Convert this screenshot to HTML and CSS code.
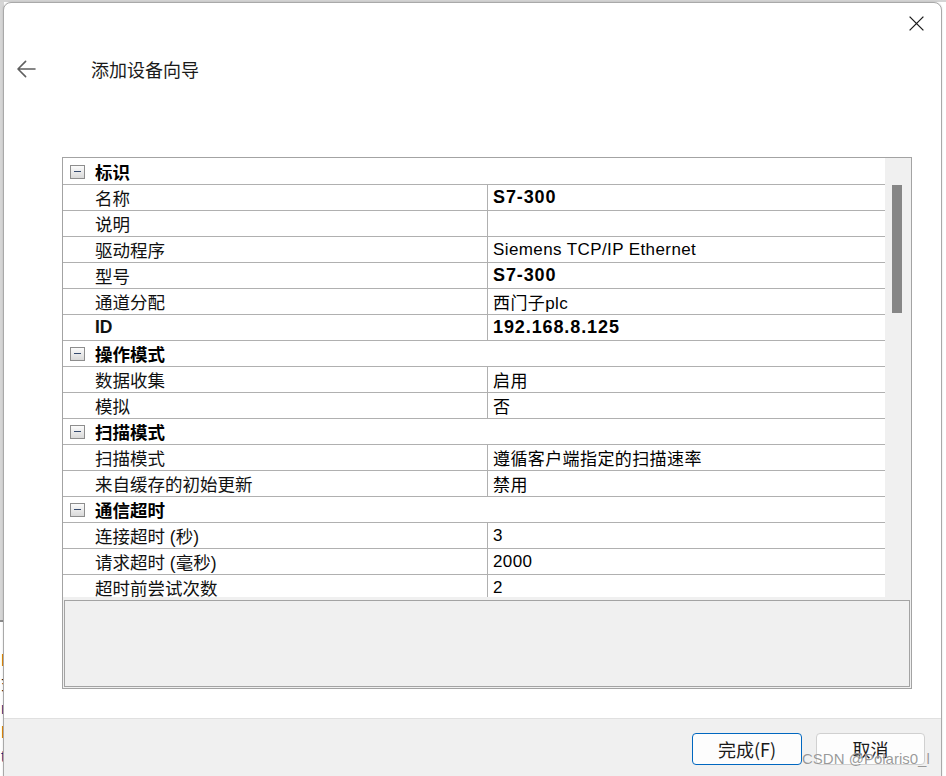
FILE: index.html
```html
<!DOCTYPE html>
<html lang="zh-CN">
<head>
<meta charset="utf-8">
<title>添加设备向导</title>
<link rel="stylesheet" href="styles.css">
</head>
<body>
<div class="desktop">
  <div class="backwin">
    <div class="back-line orange">E</div>
    <div class="back-line">式</div>
    <div class="back-line navy">n</div>
    <div class="back-line orange">E</div>
    <div class="back-line navy">t</div>
  </div>

  <div class="dialog">
    <div class="main">
      <div class="topbar">
        <svg class="close" width="15" height="15" viewBox="0 0 15 15"><path d="M0.6 0.6 L14.4 14.4 M14.4 0.6 L0.6 14.4" stroke="#1b1b1b" stroke-width="1.3" fill="none"/></svg>
      </div>
      <div class="titlebar">
        <svg class="back" width="20" height="20" viewBox="0 0 20 20"><path d="M19 10 H2.2 M9.6 2.4 L2 10 L9.6 17.6" stroke="#5f5f5f" stroke-width="1.6" fill="none" stroke-linecap="round" stroke-linejoin="round"/></svg>
        <div class="title">添加设备向导</div>
      </div>

      <div class="grid">
        <div class="grid-top">
          <div class="rows">
            <div class="row cat"><span class="minus"></span><span class="cat-text">标识</span></div>
            <div class="row"><div class="label">名称</div><div class="value bold">S7-300</div></div>
            <div class="row"><div class="label">说明</div><div class="value"></div></div>
            <div class="row"><div class="label">驱动程序</div><div class="value">Siemens TCP/IP Ethernet</div></div>
            <div class="row"><div class="label">型号</div><div class="value bold">S7-300</div></div>
            <div class="row"><div class="label">通道分配</div><div class="value">西门子plc</div></div>
            <div class="row"><div class="label bold-label">ID</div><div class="value bold">192.168.8.125</div></div>
            <div class="row cat"><span class="minus"></span><span class="cat-text">操作模式</span></div>
            <div class="row"><div class="label">数据收集</div><div class="value">启用</div></div>
            <div class="row"><div class="label">模拟</div><div class="value">否</div></div>
            <div class="row cat"><span class="minus"></span><span class="cat-text">扫描模式</span></div>
            <div class="row"><div class="label">扫描模式</div><div class="value">遵循客户端指定的扫描速率</div></div>
            <div class="row"><div class="label">来自缓存的初始更新</div><div class="value">禁用</div></div>
            <div class="row cat"><span class="minus"></span><span class="cat-text">通信超时</span></div>
            <div class="row"><div class="label">连接超时 (秒)</div><div class="value">3</div></div>
            <div class="row"><div class="label">请求超时 (毫秒)</div><div class="value">2000</div></div>
            <div class="row"><div class="label">超时前尝试次数</div><div class="value">2</div></div>
          </div>
          <div class="scrollbar"><div class="thumb"></div></div>
        </div>
        <div class="desc"></div>
      </div>
    </div>
    <div class="footer">
      <button class="btn primary">完成(F)</button>
      <button class="btn">取消</button>
    </div>
  </div>

  <div class="watermark">CSDN @Polaris0_l</div>
</div>
</body>
</html>
```

FILE: styles.css
```css
* { box-sizing: border-box; }

html, body {
  margin: 0;
  padding: 0;
  background: #ffffff;
}

body {
  font-family: "Liberation Sans", "Noto Sans CJK SC", sans-serif;
  color: #000;
}

.desktop {
  position: relative;
  width: 946px;
  height: 776px;
  overflow: hidden;
  background:
    linear-gradient(#d4d4d4, #d4d4d4) 0 0 / 100% 2px no-repeat,
    linear-gradient(to bottom, #d6d6d6 0 620px, #8c8c8c 620px 622px, #ffffff 622px) 0 0 / 4px 100% no-repeat,
    #ffffff;
}

/* window behind the dialog (only a sliver visible) */
.backwin {
  padding: 652px 0 0 1px;
  font-family: "Liberation Sans", "Noto Sans CJK SC", sans-serif;
  font-size: 16px;
}
.back-line {
  height: 24px;
  line-height: 18px;
  color: #111;
}
.back-line.orange { color: #b15c00; }
.back-line.navy { color: #1a2c80; }

/* dialog window */
.dialog {
  position: absolute;
  left: 3px;
  top: 2px;
  width: 939px;
  height: 800px;
  border: 1px solid #a9a9a9;
  border-radius: 8px 8px 0 0;
  background: #ffffff;
  display: flex;
  flex-direction: column;
  box-shadow: 0 0 2px rgba(0, 0, 0, 0.15);
}

.main {
  height: 715px;
  flex: none;
  display: flex;
  flex-direction: column;
}

.topbar {
  display: flex;
  justify-content: flex-end;
  padding: 13px 17px 0 0;
  height: 28px;
}
.close { display: block; }

.titlebar {
  margin-top: 24px;
  height: 28px;
  display: flex;
  align-items: center;
  padding-left: 12px;
}
.back { display: block; }
.title {
  margin-left: 55px;
  font-family: "Noto Sans CJK SC", sans-serif;
  font-size: 18px;
  line-height: 28px;
  color: #1a1a1a;
}

/* property grid */
.grid {
  margin: 74px 29px 0 58px;
  height: 532px;
  border: 1px solid #a3a3a3;
  background: #f0f0f0;
  display: flex;
  flex-direction: column;
}

.grid-top {
  height: 439px;
  display: flex;
  flex: none;
}

.rows {
  flex: 1;
  background: #ffffff;
  overflow: hidden;
  padding-top: 1px;
}

.row {
  display: flex;
  align-items: center;
  height: 26px;
  border-bottom: 1px solid #b0b0b0;
  font-size: 17.5px;
}

.label {
  width: 424px;
  flex: none;
  height: 100%;
  display: flex;
  align-items: center;
  padding-left: 32px;
  font-family: "Liberation Sans", "Noto Sans CJK SC", sans-serif;
  color: #111;
  white-space: nowrap;
}
.bold-label { font-weight: bold; }

.value {
  flex: 1;
  height: 100%;
  display: flex;
  align-items: center;
  border-left: 1px solid #b0b0b0;
  padding-left: 5px;
  font-size: 17px;
  letter-spacing: 0.4px;
  color: #000;
  white-space: nowrap;
}
.value.bold {
  font-weight: bold;
  font-size: 18px;
  letter-spacing: 0.9px;
}

.row.cat { padding-left: 7px; }

.minus {
  width: 15px;
  height: 14px;
  flex: none;
  border: 1px solid #8d8d8d;
  background: linear-gradient(#fbfbfb, #d9d9d9);
  position: relative;
}
.minus::after {
  content: "";
  position: absolute;
  left: 3px;
  right: 3px;
  top: 5px;
  height: 1px;
  background: #354a6e;
}

.cat-text {
  margin-left: 10px;
  font-family: "Noto Sans CJK SC", sans-serif;
  font-weight: bold;
  font-size: 17.5px;
  color: #000;
}

.scrollbar {
  width: 26px;
  flex: none;
  background: #f0f0f0;
  padding: 27px 0 0 7px;
}
.thumb {
  width: 10px;
  height: 128px;
  background: #868686;
}

.desc {
  margin: 3px 1px 1px 1px;
  height: 87px;
  border: 1px solid #a3a3a3;
  background: #f0f0f0;
}

/* footer */
.footer {
  flex: 1;
  background: #f0f0f0;
  border-top: 1px solid #e0e0e0;
  display: flex;
  justify-content: flex-end;
  align-items: flex-start;
  gap: 14px;
  padding: 14px 16px 0 0;
}

.btn {
  width: 109px;
  height: 32px;
  border: 1px solid #d0d0d0;
  border-radius: 4px;
  background: #fdfdfd;
  font-family: "Noto Sans CJK SC", sans-serif;
  font-size: 18px;
  color: #1a1a1a;
  padding: 0;
  line-height: 30px;
}
.btn.primary {
  width: 110px;
  border-color: #0067c0;
}

.watermark {
  position: absolute;
  left: 802px;
  top: 750px;
  font-family: "Liberation Sans", sans-serif;
  font-size: 15px;
  color: rgba(120, 120, 120, 0.75);
  text-shadow: 0 0 1px rgba(255, 255, 255, 0.9);
  white-space: nowrap;
}
```
